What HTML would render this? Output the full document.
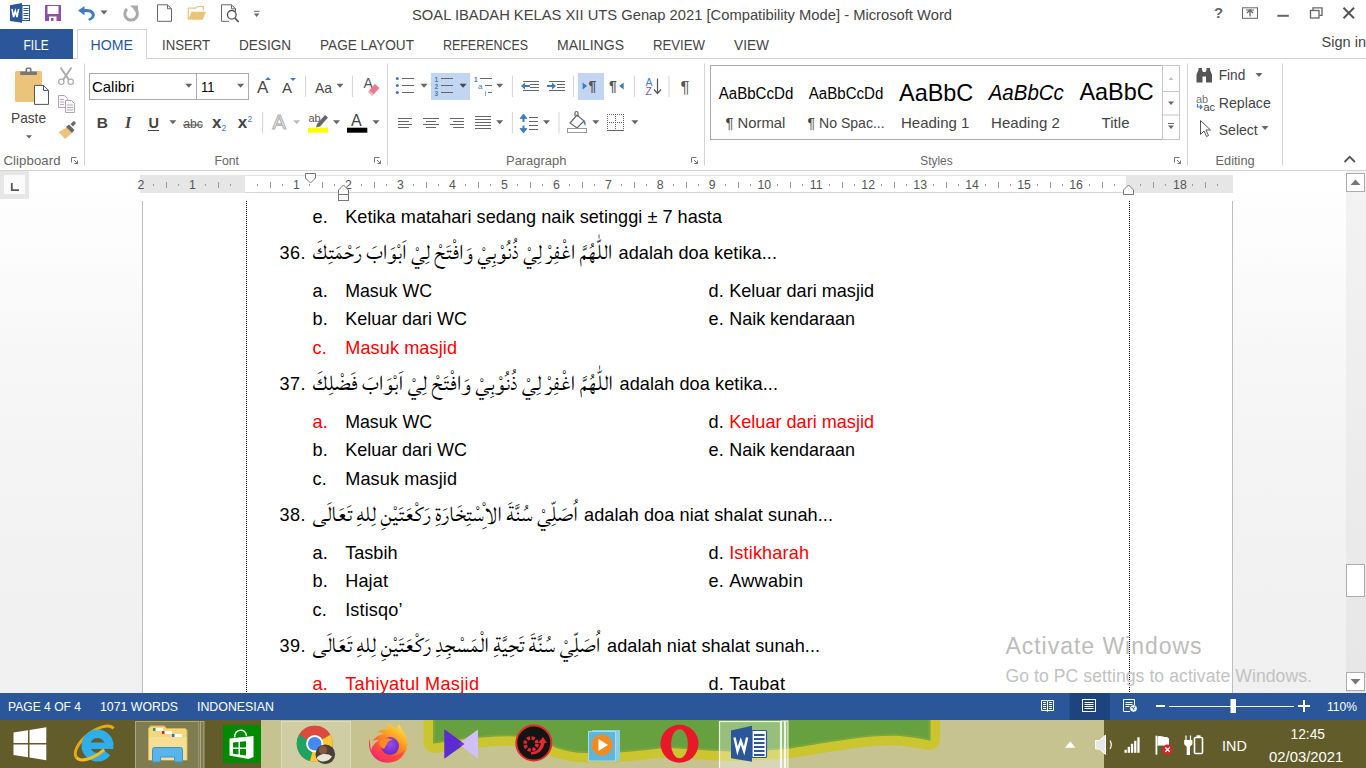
<!DOCTYPE html>
<html lang="id"><head><meta charset="utf-8"><title>SOAL IBADAH KELAS XII UTS Genap 2021 [Compatibility Mode] - Microsoft Word</title>
<style>
html,body{margin:0;padding:0;width:1366px;height:768px;overflow:hidden;background:#fff;font-family:"Liberation Sans",sans-serif}
#app{position:relative;width:1366px;height:768px;overflow:hidden;background:#fff}
#app>div{position:absolute;box-sizing:border-box}
#ov{position:absolute;left:0;top:0;width:1366px;height:768px}
text{white-space:pre}
</style></head><body><div id="app">
<div style="left:0px;top:171px;width:1366px;height:522px;background:linear-gradient(#ffffff 0%,#fefefe 6%,#f7f7f7 35%,#f3f3f3 62%,#f0f0f0 100%);"></div>
<div style="left:0px;top:170px;width:1366px;height:1px;background:#d4d4d4;"></div>
<div style="left:0px;top:29px;width:73px;height:30px;background:#2b579a;"></div>
<div style="left:73px;top:58px;width:1293px;height:1px;background:#d4d4d4;"></div>
<div style="left:77px;top:29px;width:70px;height:30px;background:#fff;border:1px solid #d4d4d4;border-bottom:none"></div>
<div style="left:0px;top:171px;width:29px;height:28px;background:#e6e6e6;"></div>
<div style="left:4px;top:175px;width:21px;height:19px;background:#fbfbfb;"></div>
<div style="left:140px;top:175px;width:1093px;height:18px;background:#e6e6e6;"></div>
<div style="left:245px;top:175px;width:881px;height:18px;background:#ffffff;border-bottom:1px solid #d6d6d6;border-top:1px solid #e2e2e2"></div>
<div style="left:142px;top:201px;width:1091px;height:492px;background:#fff;border-left:1px solid #bdbdbd;border-right:1px solid #bdbdbd"></div>
<div style="left:246px;top:201px;width:1px;height:492px;background:repeating-linear-gradient(#000 0,#000 1px,transparent 1px,transparent 2px);"></div>
<div style="left:1129px;top:201px;width:1px;height:492px;background:repeating-linear-gradient(#000 0,#000 1px,transparent 1px,transparent 2px);"></div>
<div style="left:1346px;top:171px;width:20px;height:522px;background:linear-gradient(#f3f3f3,#e6e6e6);"></div>
<div style="left:1346px;top:173px;width:19px;height:19px;background:#fff;border:1px solid #ababab"></div>
<div style="left:1346px;top:564px;width:19px;height:33px;background:#fff;border:1px solid #ababab"></div>
<div style="left:1346px;top:672px;width:19px;height:19px;background:#fff;border:1px solid #ababab"></div>
<div style="left:0px;top:693px;width:1366px;height:27px;background:#2b579a;"></div>
<div style="left:0px;top:720px;width:1366px;height:48px;background:#c6c391;"></div>
<div style="left:0px;top:720px;width:261px;height:48px;background:#625c2a;"></div>
<div style="left:1104px;top:720px;width:262px;height:48px;background:#625c2a;"></div>
<div style="left:89px;top:73px;width:108px;height:27px;background:#fff;border:1px solid #ababab"></div>
<div style="left:196px;top:73px;width:53px;height:27px;background:#fff;border:1px solid #ababab"></div>
<div style="left:710px;top:65px;width:470px;height:75px;background:#fff;border:1px solid #ababab"></div>
<div style="left:1162px;top:65px;width:18px;height:75px;background:#fff;border:1px solid #c6c6c6;border-left:1px solid #c6c6c6"></div>
<svg id="ov" width="1366" height="768" viewBox="0 0 1366 768">
<path d="M1350.5 185l5-5.5 5 5.5z" fill="#777"/>
<path d="M1350.5 679l5 5.5 5-5.5z" fill="#777"/>
<text x="412.0" y="19.5" font-family="'Liberation Sans', sans-serif" font-size="15" fill="#444444" textLength="540.0" lengthAdjust="spacingAndGlyphs">SOAL IBADAH KELAS XII UTS Genap 2021 [Compatibility Mode] - Microsoft Word</text>
<text x="23.6" y="49.8" font-family="'Liberation Sans', sans-serif" font-size="15" fill="#fff" textLength="25.1" lengthAdjust="spacingAndGlyphs">FILE</text>
<text x="90.5" y="49.8" font-family="'Liberation Sans', sans-serif" font-size="15" fill="#2b579a" textLength="42.5" lengthAdjust="spacingAndGlyphs">HOME</text>
<text x="162.0" y="49.8" font-family="'Liberation Sans', sans-serif" font-size="15" fill="#444444" textLength="48.0" lengthAdjust="spacingAndGlyphs">INSERT</text>
<text x="239.0" y="49.8" font-family="'Liberation Sans', sans-serif" font-size="15" fill="#444444" textLength="52.0" lengthAdjust="spacingAndGlyphs">DESIGN</text>
<text x="320.0" y="49.8" font-family="'Liberation Sans', sans-serif" font-size="15" fill="#444444" textLength="94.0" lengthAdjust="spacingAndGlyphs">PAGE LAYOUT</text>
<text x="443.0" y="49.8" font-family="'Liberation Sans', sans-serif" font-size="15" fill="#444444" textLength="85.0" lengthAdjust="spacingAndGlyphs">REFERENCES</text>
<text x="557.0" y="49.8" font-family="'Liberation Sans', sans-serif" font-size="15" fill="#444444" textLength="67.0" lengthAdjust="spacingAndGlyphs">MAILINGS</text>
<text x="653.0" y="49.8" font-family="'Liberation Sans', sans-serif" font-size="15" fill="#444444" textLength="52.0" lengthAdjust="spacingAndGlyphs">REVIEW</text>
<text x="734.0" y="49.8" font-family="'Liberation Sans', sans-serif" font-size="15" fill="#444444" textLength="35.0" lengthAdjust="spacingAndGlyphs">VIEW</text>
<text x="1321.5" y="47.0" font-family="'Liberation Sans', sans-serif" font-size="15" fill="#444444" textLength="44.5" lengthAdjust="spacingAndGlyphs">Sign in</text>
<text x="3.5" y="164.8" font-family="'Liberation Sans', sans-serif" font-size="13.2" fill="#666" textLength="57.0" lengthAdjust="spacing">Clipboard</text>
<text x="214.5" y="164.8" font-family="'Liberation Sans', sans-serif" font-size="13.2" fill="#666" textLength="24.5" lengthAdjust="spacingAndGlyphs">Font</text>
<text x="506.0" y="164.8" font-family="'Liberation Sans', sans-serif" font-size="13.2" fill="#666" textLength="60.4" lengthAdjust="spacingAndGlyphs">Paragraph</text>
<text x="920.3" y="164.8" font-family="'Liberation Sans', sans-serif" font-size="13.2" fill="#666" textLength="32.3" lengthAdjust="spacingAndGlyphs">Styles</text>
<text x="1215.6" y="164.8" font-family="'Liberation Sans', sans-serif" font-size="13.2" fill="#666" textLength="39.0" lengthAdjust="spacingAndGlyphs">Editing</text>
<text x="11.0" y="122.7" font-family="'Liberation Sans', sans-serif" font-size="15" fill="#444444" textLength="35.0" lengthAdjust="spacingAndGlyphs">Paste</text>
<text x="92.0" y="91.6" font-family="'Liberation Sans', sans-serif" font-size="15" fill="#000" textLength="42.4" lengthAdjust="spacingAndGlyphs">Calibri</text>
<text x="201.0" y="91.6" font-family="'Liberation Sans', sans-serif" font-size="15" fill="#000" textLength="13.5" lengthAdjust="spacingAndGlyphs">11</text>
<text x="718.7" y="98.5" font-family="'Liberation Sans', sans-serif" font-size="16" fill="#000" textLength="74.6" lengthAdjust="spacingAndGlyphs">AaBbCcDd</text>
<text x="725.4" y="127.7" font-family="'Liberation Sans', sans-serif" font-size="15" fill="#444444" textLength="60.0" lengthAdjust="spacingAndGlyphs">¶ Normal</text>
<text x="808.8" y="98.5" font-family="'Liberation Sans', sans-serif" font-size="16" fill="#000" textLength="74.6" lengthAdjust="spacingAndGlyphs">AaBbCcDd</text>
<text x="807.5" y="127.7" font-family="'Liberation Sans', sans-serif" font-size="15" fill="#444444" textLength="77.2" lengthAdjust="spacingAndGlyphs">¶ No Spac...</text>
<text x="899.0" y="100.5" font-family="'Liberation Sans', sans-serif" font-size="24" fill="#000" textLength="74.3" lengthAdjust="spacingAndGlyphs">AaBbC</text>
<text x="901.0" y="127.7" font-family="'Liberation Sans', sans-serif" font-size="15" fill="#444444" textLength="68.3" lengthAdjust="spacingAndGlyphs">Heading 1</text>
<text x="988.7" y="100.3" font-family="'Liberation Sans', sans-serif" font-size="21.5" fill="#000" font-style="italic" textLength="75.1" lengthAdjust="spacingAndGlyphs">AaBbCc</text>
<text x="991.0" y="127.7" font-family="'Liberation Sans', sans-serif" font-size="15" fill="#444444" textLength="68.9" lengthAdjust="spacing">Heading 2</text>
<text x="1079.4" y="100.3" font-family="'Liberation Sans', sans-serif" font-size="24" fill="#000" textLength="74.2" lengthAdjust="spacingAndGlyphs">AaBbC</text>
<text x="1101.5" y="127.7" font-family="'Liberation Sans', sans-serif" font-size="15" fill="#444444" textLength="28.1" lengthAdjust="spacing">Title</text>
<text x="1218.7" y="80.2" font-family="'Liberation Sans', sans-serif" font-size="15" fill="#444444" textLength="26.6" lengthAdjust="spacingAndGlyphs">Find</text>
<text x="1218.7" y="107.6" font-family="'Liberation Sans', sans-serif" font-size="15" fill="#444444" textLength="52.1" lengthAdjust="spacingAndGlyphs">Replace</text>
<text x="1218.7" y="134.9" font-family="'Liberation Sans', sans-serif" font-size="15" fill="#444444" textLength="39.1" lengthAdjust="spacingAndGlyphs">Select</text>
<text x="137.4" y="188.8" font-family="'Liberation Sans', sans-serif" font-size="12.3" fill="#555">2</text>
<text x="189.1" y="188.8" font-family="'Liberation Sans', sans-serif" font-size="12.3" fill="#555">1</text>
<text x="293.0" y="188.8" font-family="'Liberation Sans', sans-serif" font-size="12.3" fill="#555">1</text>
<text x="345.0" y="188.8" font-family="'Liberation Sans', sans-serif" font-size="12.3" fill="#555">2</text>
<text x="397.0" y="188.8" font-family="'Liberation Sans', sans-serif" font-size="12.3" fill="#555">3</text>
<text x="449.0" y="188.8" font-family="'Liberation Sans', sans-serif" font-size="12.3" fill="#555">4</text>
<text x="500.9" y="188.8" font-family="'Liberation Sans', sans-serif" font-size="12.3" fill="#555">5</text>
<text x="552.9" y="188.8" font-family="'Liberation Sans', sans-serif" font-size="12.3" fill="#555">6</text>
<text x="604.9" y="188.8" font-family="'Liberation Sans', sans-serif" font-size="12.3" fill="#555">7</text>
<text x="656.8" y="188.8" font-family="'Liberation Sans', sans-serif" font-size="12.3" fill="#555">8</text>
<text x="708.8" y="188.8" font-family="'Liberation Sans', sans-serif" font-size="12.3" fill="#555">9</text>
<text x="757.4" y="188.8" font-family="'Liberation Sans', sans-serif" font-size="12.3" fill="#555">10</text>
<text x="809.8" y="188.8" font-family="'Liberation Sans', sans-serif" font-size="12.3" fill="#555">11</text>
<text x="861.3" y="188.8" font-family="'Liberation Sans', sans-serif" font-size="12.3" fill="#555">12</text>
<text x="913.3" y="188.8" font-family="'Liberation Sans', sans-serif" font-size="12.3" fill="#555">13</text>
<text x="965.2" y="188.8" font-family="'Liberation Sans', sans-serif" font-size="12.3" fill="#555">14</text>
<text x="1017.2" y="188.8" font-family="'Liberation Sans', sans-serif" font-size="12.3" fill="#555">15</text>
<text x="1069.2" y="188.8" font-family="'Liberation Sans', sans-serif" font-size="12.3" fill="#555">16</text>
<text x="1173.1" y="188.8" font-family="'Liberation Sans', sans-serif" font-size="12.3" fill="#555">18</text>
<rect x="153" y="184" width="1" height="2" fill="#999"/>
<rect x="166" y="182" width="1" height="6" fill="#999"/>
<rect x="178" y="184" width="1" height="2" fill="#999"/>
<rect x="205" y="184" width="1" height="2" fill="#999"/>
<rect x="218" y="182" width="1" height="6" fill="#999"/>
<rect x="230" y="184" width="1" height="2" fill="#999"/>
<rect x="257" y="184" width="1" height="2" fill="#999"/>
<rect x="270" y="182" width="1" height="6" fill="#999"/>
<rect x="282" y="184" width="1" height="2" fill="#999"/>
<rect x="309" y="184" width="1" height="2" fill="#999"/>
<rect x="322" y="182" width="1" height="6" fill="#999"/>
<rect x="334" y="184" width="1" height="2" fill="#999"/>
<rect x="361" y="184" width="1" height="2" fill="#999"/>
<rect x="374" y="182" width="1" height="6" fill="#999"/>
<rect x="386" y="184" width="1" height="2" fill="#999"/>
<rect x="413" y="184" width="1" height="2" fill="#999"/>
<rect x="426" y="182" width="1" height="6" fill="#999"/>
<rect x="438" y="184" width="1" height="2" fill="#999"/>
<rect x="465" y="184" width="1" height="2" fill="#999"/>
<rect x="478" y="182" width="1" height="6" fill="#999"/>
<rect x="490" y="184" width="1" height="2" fill="#999"/>
<rect x="517" y="184" width="1" height="2" fill="#999"/>
<rect x="530" y="182" width="1" height="6" fill="#999"/>
<rect x="542" y="184" width="1" height="2" fill="#999"/>
<rect x="569" y="184" width="1" height="2" fill="#999"/>
<rect x="582" y="182" width="1" height="6" fill="#999"/>
<rect x="594" y="184" width="1" height="2" fill="#999"/>
<rect x="621" y="184" width="1" height="2" fill="#999"/>
<rect x="634" y="182" width="1" height="6" fill="#999"/>
<rect x="646" y="184" width="1" height="2" fill="#999"/>
<rect x="673" y="184" width="1" height="2" fill="#999"/>
<rect x="686" y="182" width="1" height="6" fill="#999"/>
<rect x="698" y="184" width="1" height="2" fill="#999"/>
<rect x="725" y="184" width="1" height="2" fill="#999"/>
<rect x="738" y="182" width="1" height="6" fill="#999"/>
<rect x="750" y="184" width="1" height="2" fill="#999"/>
<rect x="777" y="184" width="1" height="2" fill="#999"/>
<rect x="790" y="182" width="1" height="6" fill="#999"/>
<rect x="802" y="184" width="1" height="2" fill="#999"/>
<rect x="829" y="184" width="1" height="2" fill="#999"/>
<rect x="842" y="182" width="1" height="6" fill="#999"/>
<rect x="854" y="184" width="1" height="2" fill="#999"/>
<rect x="881" y="184" width="1" height="2" fill="#999"/>
<rect x="894" y="182" width="1" height="6" fill="#999"/>
<rect x="906" y="184" width="1" height="2" fill="#999"/>
<rect x="933" y="184" width="1" height="2" fill="#999"/>
<rect x="946" y="182" width="1" height="6" fill="#999"/>
<rect x="958" y="184" width="1" height="2" fill="#999"/>
<rect x="985" y="184" width="1" height="2" fill="#999"/>
<rect x="998" y="182" width="1" height="6" fill="#999"/>
<rect x="1010" y="184" width="1" height="2" fill="#999"/>
<rect x="1037" y="184" width="1" height="2" fill="#999"/>
<rect x="1050" y="182" width="1" height="6" fill="#999"/>
<rect x="1062" y="184" width="1" height="2" fill="#999"/>
<rect x="1089" y="184" width="1" height="2" fill="#999"/>
<rect x="1102" y="182" width="1" height="6" fill="#999"/>
<rect x="1114" y="184" width="1" height="2" fill="#999"/>
<rect x="1140" y="184" width="1" height="2" fill="#999"/>
<rect x="1153" y="182" width="1" height="6" fill="#999"/>
<rect x="1165" y="184" width="1" height="2" fill="#999"/>
<rect x="1192" y="184" width="1" height="2" fill="#999"/>
<rect x="1205" y="182" width="1" height="6" fill="#999"/>
<rect x="1217" y="184" width="1" height="2" fill="#999"/>
<text x="312.6" y="222.9" font-family="'Liberation Sans', sans-serif" font-size="18.1" fill="#000">e.</text>
<text x="345.2" y="222.9" font-family="'Liberation Sans', sans-serif" font-size="18.1" fill="#000" textLength="376.8" lengthAdjust="spacing">Ketika matahari sedang naik setinggi ± 7 hasta</text>
<text x="279.6" y="258.5" font-family="'Liberation Sans', sans-serif" font-size="18.1" fill="#000" textLength="26.0" lengthAdjust="spacing">36.</text>
<text x="312.4" y="258.5" font-family="Lateef, 'Scheherazade New', Amiri, 'Noto Naskh Arabic', 'DejaVu Sans', sans-serif" font-size="27.5" fill="#000" textLength="299.9" lengthAdjust="spacingAndGlyphs" font-weight="300">اللّٰهُمَّ اغْفِرْ لِيْ ذُنُوْبِيْ وَافْتَحْ لِيْ اَبْوَابَ رَحْمَتِكَ</text>
<text x="618.5" y="258.5" font-family="'Liberation Sans', sans-serif" font-size="18.1" fill="#000" textLength="158.5" lengthAdjust="spacing">adalah doa ketika...</text>
<text x="312.6" y="296.5" font-family="'Liberation Sans', sans-serif" font-size="18.1" fill="#000">a.</text>
<text x="345.2" y="296.5" font-family="'Liberation Sans', sans-serif" font-size="18.1" fill="#000" textLength="86.8" lengthAdjust="spacingAndGlyphs">Masuk WC</text>
<text x="312.6" y="325.1" font-family="'Liberation Sans', sans-serif" font-size="18.1" fill="#000">b.</text>
<text x="345.2" y="325.1" font-family="'Liberation Sans', sans-serif" font-size="18.1" fill="#000" textLength="121.8" lengthAdjust="spacingAndGlyphs">Keluar dari WC</text>
<text x="312.6" y="353.8" font-family="'Liberation Sans', sans-serif" font-size="18.1" fill="#ff0000">c.</text>
<text x="345.2" y="353.8" font-family="'Liberation Sans', sans-serif" font-size="18.1" fill="#ff0000" textLength="111.8" lengthAdjust="spacing">Masuk masjid</text>
<text x="708.6" y="296.5" font-family="'Liberation Sans', sans-serif" font-size="18.1" fill="#000">d.</text>
<text x="729.2" y="296.5" font-family="'Liberation Sans', sans-serif" font-size="18.1" fill="#000" textLength="144.8" lengthAdjust="spacingAndGlyphs">Keluar dari masjid</text>
<text x="708.6" y="325.1" font-family="'Liberation Sans', sans-serif" font-size="18.1" fill="#000">e.</text>
<text x="729.2" y="325.1" font-family="'Liberation Sans', sans-serif" font-size="18.1" fill="#000" textLength="125.8" lengthAdjust="spacingAndGlyphs">Naik kendaraan</text>
<text x="279.6" y="389.5" font-family="'Liberation Sans', sans-serif" font-size="18.1" fill="#000" textLength="26.0" lengthAdjust="spacing">37.</text>
<text x="312.4" y="389.5" font-family="Lateef, 'Scheherazade New', Amiri, 'Noto Naskh Arabic', 'DejaVu Sans', sans-serif" font-size="27.5" fill="#000" textLength="300.6" lengthAdjust="spacingAndGlyphs" font-weight="300">اللّٰهُمَّ اغْفِرْ لِيْ ذُنُوْبِيْ وَافْتَحْ لِيْ اَبْوَابَ فَضْلِكَ</text>
<text x="619.5" y="389.5" font-family="'Liberation Sans', sans-serif" font-size="18.1" fill="#000" textLength="158.5" lengthAdjust="spacing">adalah doa ketika...</text>
<text x="312.6" y="427.5" font-family="'Liberation Sans', sans-serif" font-size="18.1" fill="#ff0000">a.</text>
<text x="345.2" y="427.5" font-family="'Liberation Sans', sans-serif" font-size="18.1" fill="#000" textLength="86.8" lengthAdjust="spacingAndGlyphs">Masuk WC</text>
<text x="312.6" y="456.1" font-family="'Liberation Sans', sans-serif" font-size="18.1" fill="#000">b.</text>
<text x="345.2" y="456.1" font-family="'Liberation Sans', sans-serif" font-size="18.1" fill="#000" textLength="121.8" lengthAdjust="spacingAndGlyphs">Keluar dari WC</text>
<text x="312.6" y="484.8" font-family="'Liberation Sans', sans-serif" font-size="18.1" fill="#000">c.</text>
<text x="345.2" y="484.8" font-family="'Liberation Sans', sans-serif" font-size="18.1" fill="#000" textLength="111.8" lengthAdjust="spacing">Masuk masjid</text>
<text x="708.6" y="427.5" font-family="'Liberation Sans', sans-serif" font-size="18.1" fill="#000">d.</text>
<text x="729.2" y="427.5" font-family="'Liberation Sans', sans-serif" font-size="18.1" fill="#ff0000" textLength="144.8" lengthAdjust="spacingAndGlyphs">Keluar dari masjid</text>
<text x="708.6" y="456.1" font-family="'Liberation Sans', sans-serif" font-size="18.1" fill="#000">e.</text>
<text x="729.2" y="456.1" font-family="'Liberation Sans', sans-serif" font-size="18.1" fill="#000" textLength="125.8" lengthAdjust="spacingAndGlyphs">Naik kendaraan</text>
<text x="279.6" y="520.5" font-family="'Liberation Sans', sans-serif" font-size="18.1" fill="#000" textLength="26.0" lengthAdjust="spacing">38.</text>
<text x="312.4" y="520.5" font-family="Lateef, 'Scheherazade New', Amiri, 'Noto Naskh Arabic', 'DejaVu Sans', sans-serif" font-size="27.5" fill="#000" textLength="265.6" lengthAdjust="spacingAndGlyphs" font-weight="300">اُصَلِّيْ سُنَّةَ الْاِسْتِخَارَةِ رَكْعَتَيْنِ لِلهِ تَعَالَى</text>
<text x="584.0" y="520.5" font-family="'Liberation Sans', sans-serif" font-size="18.1" fill="#000" textLength="249.0" lengthAdjust="spacing">adalah doa niat shalat sunah...</text>
<text x="312.6" y="558.5" font-family="'Liberation Sans', sans-serif" font-size="18.1" fill="#000">a.</text>
<text x="345.2" y="558.5" font-family="'Liberation Sans', sans-serif" font-size="18.1" fill="#000" textLength="52.3" lengthAdjust="spacingAndGlyphs">Tasbih</text>
<text x="312.6" y="587.1" font-family="'Liberation Sans', sans-serif" font-size="18.1" fill="#000">b.</text>
<text x="345.2" y="587.1" font-family="'Liberation Sans', sans-serif" font-size="18.1" fill="#000" textLength="42.8" lengthAdjust="spacing">Hajat</text>
<text x="312.6" y="615.8" font-family="'Liberation Sans', sans-serif" font-size="18.1" fill="#000">c.</text>
<text x="345.2" y="615.8" font-family="'Liberation Sans', sans-serif" font-size="18.1" fill="#000" textLength="57.3" lengthAdjust="spacing">Istisqo’</text>
<text x="708.6" y="558.5" font-family="'Liberation Sans', sans-serif" font-size="18.1" fill="#000">d.</text>
<text x="729.2" y="558.5" font-family="'Liberation Sans', sans-serif" font-size="18.1" fill="#ff0000" textLength="79.8" lengthAdjust="spacing">Istikharah</text>
<text x="708.6" y="587.1" font-family="'Liberation Sans', sans-serif" font-size="18.1" fill="#000">e.</text>
<text x="729.2" y="587.1" font-family="'Liberation Sans', sans-serif" font-size="18.1" fill="#000" textLength="73.8" lengthAdjust="spacing">Awwabin</text>
<text x="279.6" y="651.5" font-family="'Liberation Sans', sans-serif" font-size="18.1" fill="#000" textLength="26.0" lengthAdjust="spacing">39.</text>
<text x="312.4" y="651.5" font-family="Lateef, 'Scheherazade New', Amiri, 'Noto Naskh Arabic', 'DejaVu Sans', sans-serif" font-size="27.5" fill="#000" textLength="288.1" lengthAdjust="spacingAndGlyphs" font-weight="300">اُصَلِّيْ سُنَّةَ تَحِيَّةِ الْمَسْجِدِ رَكْعَتَيْنِ لِلهِ تَعَالَى</text>
<text x="607.0" y="651.5" font-family="'Liberation Sans', sans-serif" font-size="18.1" fill="#000" textLength="213.0" lengthAdjust="spacing">adalah niat shalat sunah...</text>
<g clip-path="url(#docclip)">
<text x="312.6" y="689.5" font-family="'Liberation Sans', sans-serif" font-size="18.1" fill="#ff0000">a.</text>
<text x="345.2" y="689.5" font-family="'Liberation Sans', sans-serif" font-size="18.1" fill="#ff0000" textLength="133.8" lengthAdjust="spacing">Tahiyatul Masjid</text>
<text x="708.6" y="689.5" font-family="'Liberation Sans', sans-serif" font-size="18.1" fill="#000">d.</text>
<text x="729.2" y="689.5" font-family="'Liberation Sans', sans-serif" font-size="18.1" fill="#000" textLength="55.8" lengthAdjust="spacing">Taubat</text>
</g>
<defs><clipPath id="docclip"><rect x="0" y="200" width="1366" height="493"/></clipPath></defs>
<text x="1005.5" y="654.0" font-family="'Liberation Sans', sans-serif" font-size="23" fill="#bcbcbc" textLength="196.0" lengthAdjust="spacing">Activate Windows</text>
<text x="1005.5" y="681.5" font-family="'Liberation Sans', sans-serif" font-size="17.6" fill="#c2c2c2" textLength="306.5" lengthAdjust="spacing">Go to PC settings to activate Windows.</text>
<text x="8.0" y="711.0" font-family="'Liberation Sans', sans-serif" font-size="13.2" fill="#fff" textLength="73.0" lengthAdjust="spacingAndGlyphs">PAGE 4 OF 4</text>
<text x="100.0" y="711.0" font-family="'Liberation Sans', sans-serif" font-size="13.2" fill="#fff" textLength="78.0" lengthAdjust="spacingAndGlyphs">1071 WORDS</text>
<text x="197.0" y="711.0" font-family="'Liberation Sans', sans-serif" font-size="13.2" fill="#fff" textLength="77.0" lengthAdjust="spacingAndGlyphs">INDONESIAN</text>
<text x="1327.0" y="711.0" font-family="'Liberation Sans', sans-serif" font-size="13.2" fill="#fff" textLength="30.0" lengthAdjust="spacingAndGlyphs">110%</text>
<text x="1222.0" y="751.0" font-family="'Liberation Sans', sans-serif" font-size="15" fill="#fff" textLength="24.8" lengthAdjust="spacingAndGlyphs">IND</text>
<text x="1290.5" y="739.4" font-family="'Liberation Sans', sans-serif" font-size="15" fill="#fff" textLength="34.5" lengthAdjust="spacingAndGlyphs">12:45</text>
<text x="1269.0" y="762.0" font-family="'Liberation Sans', sans-serif" font-size="15" fill="#fff" textLength="74.3" lengthAdjust="spacingAndGlyphs">02/03/2021</text>
<path d="M10 5.3L22 2.9V22.7L10 21z" fill="#2b579a"/>
<rect x="22" y="5.5" width="7.5" height="15" fill="#fff" stroke="#2b579a" stroke-width="1"/>
<rect x="23.5" y="8" width="5" height="1" fill="#2b579a"/>
<rect x="23.5" y="10" width="5" height="1" fill="#2b579a"/>
<rect x="23.5" y="13" width="5" height="1" fill="#2b579a"/>
<rect x="23.5" y="15" width="5" height="1" fill="#2b579a"/>
<rect x="23.5" y="18" width="5" height="1" fill="#2b579a"/>
<path d="M12 9l1.6 8 1.7-6 1.7 6 1.6-8" fill="none" stroke="#fff" stroke-width="1.6"/>
<path d="M45 5h16v16h-16z" fill="#8d52a8"/><rect x="47.5" y="6" width="11" height="8" fill="#fff"/><rect x="49" y="16.5" width="7.5" height="4.5" fill="#fff"/><rect x="51" y="18" width="2.5" height="3" fill="#8d52a8"/>
<path d="M78 10.5l6.5-4.5v3c7-.6 10.5 2.5 10.3 6.3-.2 3-2.6 4.800-5.800 5.500l-.8-2c2.600-.9 3.600-2 3.600-3.700 0-2.300-2.800-3.600-7.300-3.100v3.200z" fill="#3e7cc0"/>
<path d="M100.5 10.5h7l-3.5 4z" fill="#666"/>
<path d="M134.500 8.500a6.300 6.300 0 1 1-7.500.5" fill="none" stroke="#ababab" stroke-width="3"/><path d="M130 5.500h8v8z" fill="#ababab"/>
<path d="M157.500 4.800h10l4 4v12.500h-14z" fill="#fff" stroke="#666" stroke-width="1"/><path d="M167.500 4.800v4h4" fill="none" stroke="#666" stroke-width="1"/>
<path d="M188.300 19.500v-11.300h7.500l1.500-1.700h6v4" fill="none" stroke="#ecc37a" stroke-width="1.200"/><path d="M188.300 19.800l3.200-8h14.500l-3.200 8z" fill="#ecc37a"/>
<path d="M221.500 4.800h10l4 4v3M229 21.300h-7.500v-16.500" fill="none" stroke="#666" stroke-width="1"/><path d="M231.500 4.800v4h4" fill="none" stroke="#666" stroke-width="1"/><circle cx="231.800" cy="14.800" r="4.300" fill="#fff" stroke="#555" stroke-width="1.300"/><path d="M235 18l3.600 4" stroke="#555" stroke-width="1.800"/>
<rect x="254" y="10.800" width="5.500" height="1" fill="#666"/>
<path d="M253.9 13.6h5.5l-2.8 3.5z" fill="#666"/>
<text x="1214.0" y="18.0" font-family="'Liberation Sans', sans-serif" font-size="15" fill="#666" font-weight="bold">?</text>
<rect x="1242.500" y="7.800" width="15" height="10.500" fill="none" stroke="#666" stroke-width="1"/><path d="M1250 16.500v-6m-3 2.500l3-3 3 3" fill="none" stroke="#666" stroke-width="1.300"/><rect x="1246" y="9.500" width="8" height="1" fill="#666"/>
<rect x="1277.300" y="14.800" width="11.500" height="2" fill="#666"/>
<path d="M1313 10v-2.200h9v7.500h-2.500" fill="none" stroke="#666" stroke-width="1.300"/><rect x="1310.500" y="10.500" width="8.500" height="7.500" fill="none" stroke="#666" stroke-width="1.300"/>
<path d="M1343.500 7.800l10.500 10.500m0-10.500l-10.500 10.500" stroke="#555" stroke-width="2"/>
<path d="M1344.500 162l5.200-5.200 5.200 5.200" fill="none" stroke="#555" stroke-width="1.800"/>
<rect x="84.0" y="63.5" width="1" height="102" fill="#d4d4d4"/>
<rect x="387.0" y="63.5" width="1" height="102" fill="#d4d4d4"/>
<rect x="704.0" y="63.5" width="1" height="102" fill="#d4d4d4"/>
<rect x="1187.0" y="63.5" width="1" height="102" fill="#d4d4d4"/>
<rect x="1282.0" y="63.5" width="1" height="102" fill="#d4d4d4"/>
<path d="M71.5 162.5v-5h5" fill="none" stroke="#777" stroke-width="1"/><path d="M74.0 160.0l3.500 3.500m0-3v3h-3" fill="none" stroke="#777" stroke-width="1"/>
<path d="M374.5 162.5v-5h5" fill="none" stroke="#777" stroke-width="1"/><path d="M377.0 160.0l3.500 3.500m0-3v3h-3" fill="none" stroke="#777" stroke-width="1"/>
<path d="M691.5 162.5v-5h5" fill="none" stroke="#777" stroke-width="1"/><path d="M694.0 160.0l3.500 3.500m0-3v3h-3" fill="none" stroke="#777" stroke-width="1"/>
<path d="M1174.5 162.5v-5h5" fill="none" stroke="#777" stroke-width="1"/><path d="M1177.0 160.0l3.500 3.500m0-3v3h-3" fill="none" stroke="#777" stroke-width="1"/>
<rect x="15" y="71" width="27" height="31" rx="1.500" fill="#ecc37a"/>
<path d="M20.200 75v-3.500h5.300v-2.500a1.500 1.500 0 0 1 1.500-1.500h3a1.500 1.500 0 0 1 1.500 1.500v2.500h5.400v3.500z" fill="#777"/><rect x="27.200" y="69" width="2.600" height="2.600" fill="#fff"/>
<path d="M34.500 85.400h9l5 5v14h-14z" fill="#fff" stroke="#555" stroke-width="1"/><path d="M43.500 85.400v5h5" fill="none" stroke="#555" stroke-width="1"/>
<path d="M26.0 135.3h6l-3.0 3.2z" fill="#666"/>
<path d="M60.500 67.500l8.500 12.500M71.500 67.500l-8.500 12.500" stroke="#ababab" stroke-width="2"/><circle cx="61.300" cy="81.800" r="2.700" fill="none" stroke="#ababab" stroke-width="1.200"/><circle cx="70.700" cy="81.800" r="2.700" fill="none" stroke="#ababab" stroke-width="1.200"/>
<path d="M58.500 95.500h6l3 3v9h-9z" fill="#fbf6fa" stroke="#b0a8b0" stroke-width="1"/><path d="M65.500 100.500h6l3 3v9h-9z" fill="#fbf6fa" stroke="#b0a8b0" stroke-width="1"/>
<rect x="60" y="99" width="4" height="1" fill="#b8b0b8"/>
<rect x="60" y="101.5" width="4" height="1" fill="#b8b0b8"/>
<rect x="60" y="104" width="4" height="1" fill="#b8b0b8"/>
<rect x="67" y="104.5" width="6" height="1" fill="#b8b0b8"/>
<rect x="67" y="107" width="6" height="1" fill="#b8b0b8"/>
<rect x="67" y="109.5" width="6" height="1" fill="#b8b0b8"/>
<path d="M58.600 132l8-4.500 5.500 5.500-7 6z" fill="#ecc37a"/><path d="M66 127l3-2.500 5.500 5.500-2.500 3z" fill="#666"/><path d="M70.500 124l3.500-3 2 2-3 3.500z" fill="#666"/>
<path d="M185.3 83.7h7l-3.5 4z" fill="#666"/>
<path d="M237.1 83.7h7l-3.5 4z" fill="#666"/>
<text x="257.0" y="93.0" font-family="'Liberation Sans', sans-serif" font-size="17" fill="#484848">A</text>
<path d="M265 80l3-3 3 3z" fill="#3e7cc0"/>
<text x="282.0" y="93.0" font-family="'Liberation Sans', sans-serif" font-size="15" fill="#484848">A</text>
<path d="M290 78h6l-3 3z" fill="#3e7cc0"/>
<rect x="305.1" y="75.5" width="1" height="21.5" fill="#d4d4d4"/>
<text x="315.0" y="92.5" font-family="'Liberation Sans', sans-serif" font-size="15" fill="#484848" textLength="17.0" lengthAdjust="spacingAndGlyphs">Aa</text>
<path d="M336.5 83.7h7l-3.5 4z" fill="#666"/>
<rect x="351.9" y="75.5" width="1" height="21.5" fill="#d4d4d4"/>
<text x="363.5" y="88.3" font-family="'Liberation Sans', sans-serif" font-size="14" fill="#555">A</text>
<path d="M369 90.500l6-6.500 4.500 4-6 6.500z" fill="#e8788a"/><path d="M367.500 92l1.500-1.500 4.500 4-1.500 1.500z" fill="#f4b8c2"/>
<text x="96.8" y="128.4" font-family="'Liberation Sans', sans-serif" font-size="15.5" fill="#444" font-weight="bold">B</text>
<text x="125.0" y="128.4" font-family="'Liberation Serif', serif" font-size="16" fill="#444" font-weight="bold" font-style="italic">I</text>
<text x="148.6" y="127.8" font-family="'Liberation Sans', sans-serif" font-size="14.5" fill="#444" font-weight="bold">U</text>
<rect x="148" y="130" width="11" height="1" fill="#444"/>
<path d="M169.4 120.3h7l-3.5 4z" fill="#666"/>
<text x="183.2" y="128.2" font-family="'Liberation Sans', sans-serif" font-size="13.5" fill="#555" textLength="19.7" lengthAdjust="spacingAndGlyphs">abc</text>
<rect x="183" y="124.500" width="20" height="1" fill="#555"/>
<text x="211.9" y="128.4" font-family="'Liberation Sans', sans-serif" font-size="17" fill="#444" font-weight="bold">x</text>
<text x="221.5" y="131.0" font-family="'Liberation Sans', sans-serif" font-size="8.5" fill="#3e7cc0">2</text>
<text x="237.7" y="128.4" font-family="'Liberation Sans', sans-serif" font-size="17" fill="#444" font-weight="bold">x</text>
<text x="247.5" y="121.5" font-family="'Liberation Sans', sans-serif" font-size="8.5" fill="#3e7cc0">2</text>
<rect x="262.1" y="112" width="1" height="21.599999999999994" fill="#d4d4d4"/>
<text x="272.5" y="129.0" font-family="'Liberation Sans', sans-serif" font-size="20" fill="#fff" stroke="#b5b5b5" stroke-width="1.200">A</text>
<path d="M293.2 120.3h7l-3.5 4z" fill="#bbb"/>
<text x="308.5" y="121.5" font-family="'Liberation Sans', sans-serif" font-size="11" fill="#555">ab</text>
<path d="M317 124l8-9 3 2.500-8 9-4 1z" fill="#666"/>
<rect x="308" y="127.700" width="20" height="5" fill="#ffff00"/>
<path d="M333.0 120.3h7l-3.5 4z" fill="#666"/>
<text x="351.0" y="125.7" font-family="'Liberation Sans', sans-serif" font-size="16" fill="#444">A</text>
<rect x="347" y="127.700" width="20.300" height="5" fill="#000"/>
<path d="M372.5 120.3h7l-3.5 4z" fill="#666"/>
<rect x="431" y="73" width="39" height="27" fill="#c2d5f2"/>
<rect x="578" y="73" width="26" height="27" fill="#c2d5f2"/>
<circle cx="397.300" cy="78.5" r="1.500" fill="#3e7cc0"/>
<rect x="402" y="78" width="12" height="1" fill="#666"/>
<circle cx="397.300" cy="85.5" r="1.500" fill="#3e7cc0"/>
<rect x="402" y="85" width="12" height="1" fill="#666"/>
<circle cx="397.300" cy="92.5" r="1.500" fill="#3e7cc0"/>
<rect x="402" y="92" width="12" height="1" fill="#666"/>
<path d="M420.5 83.7h7l-3.5 4z" fill="#666"/>
<text x="434.5" y="81.5" font-family="'Liberation Sans', sans-serif" font-size="6.5" fill="#3e7cc0" font-weight="bold">1</text>
<rect x="441" y="78" width="12" height="1" fill="#666"/>
<text x="434.5" y="88.5" font-family="'Liberation Sans', sans-serif" font-size="6.5" fill="#3e7cc0" font-weight="bold">2</text>
<rect x="441" y="85" width="12" height="1" fill="#666"/>
<text x="434.5" y="95.5" font-family="'Liberation Sans', sans-serif" font-size="6.5" fill="#3e7cc0" font-weight="bold">3</text>
<rect x="441" y="92" width="12" height="1" fill="#666"/>
<path d="M459.5 83.7h7l-3.5 4z" fill="#444"/>
<text x="474.0" y="81.5" font-family="'Liberation Sans', sans-serif" font-size="6.5" fill="#3e7cc0" font-weight="bold">1</text>
<rect x="480" y="78" width="12" height="1" fill="#666"/>
<text x="478.0" y="89.0" font-family="'Liberation Sans', sans-serif" font-size="8" fill="#3e7cc0">a</text>
<rect x="485" y="85" width="7" height="1" fill="#666"/>
<text x="484.5" y="96.0" font-family="'Liberation Sans', sans-serif" font-size="8" fill="#3e7cc0">i</text>
<rect x="488" y="92" width="4" height="1" fill="#666"/>
<path d="M496.2 83.7h7l-3.5 4z" fill="#666"/>
<rect x="511.9" y="75.5" width="1" height="21.5" fill="#d4d4d4"/>
<rect x="523" y="81" width="16" height="1" fill="#666"/>
<rect x="530" y="84" width="9" height="1" fill="#666"/>
<rect x="530" y="87" width="9" height="1" fill="#666"/>
<rect x="523" y="90" width="16" height="1" fill="#666"/>
<path d="M521 86l4-3.500v2.500h5v2h-5v2.500z" fill="#3e7cc0"/>
<rect x="549" y="81" width="16" height="1" fill="#666"/>
<rect x="557" y="84" width="8" height="1" fill="#666"/>
<rect x="557" y="87" width="8" height="1" fill="#666"/>
<rect x="549" y="90" width="16" height="1" fill="#666"/>
<path d="M556 86l-4-3.500v2.500h-5v2h5v2.500z" fill="#3e7cc0"/>
<rect x="572.9" y="75.5" width="1" height="21.5" fill="#d4d4d4"/>
<path d="M582.600 82.500l4.500 3.500-4.500 3.500z" fill="#3e7cc0"/>
<text x="588.5" y="91.0" font-family="'Liberation Sans', sans-serif" font-size="14" fill="#555" font-weight="bold">¶</text>
<text x="609.0" y="91.0" font-family="'Liberation Sans', sans-serif" font-size="14" fill="#555" font-weight="bold">¶</text>
<path d="M623.700 82.500l-4.500 3.500 4.500 3.500z" fill="#3e7cc0"/>
<rect x="633.9" y="75.5" width="1" height="21.5" fill="#d4d4d4"/>
<text x="645.5" y="85.5" font-family="'Liberation Sans', sans-serif" font-size="10.5" fill="#3e7cc0">A</text>
<text x="645.5" y="95.0" font-family="'Liberation Sans', sans-serif" font-size="10.5" fill="#8d52a8">Z</text>
<path d="M657.500 78.500v15m-3.500-4l3.500 4 3.500-4" fill="none" stroke="#555" stroke-width="1.200"/>
<rect x="668.5" y="75.5" width="1" height="21.5" fill="#d4d4d4"/>
<text x="680.6" y="92.5" font-family="'Liberation Sans', sans-serif" font-size="17" fill="#555">¶</text>
<rect x="398" y="118" width="14" height="1" fill="#666"/>
<rect x="398" y="121" width="11" height="1" fill="#666"/>
<rect x="398" y="124" width="14" height="1" fill="#666"/>
<rect x="398" y="127" width="11" height="1" fill="#666"/>
<rect x="423" y="118" width="16" height="1" fill="#666"/>
<rect x="426" y="121" width="10" height="1" fill="#666"/>
<rect x="423" y="124" width="16" height="1" fill="#666"/>
<rect x="426" y="127" width="10" height="1" fill="#666"/>
<rect x="450" y="118" width="14" height="1" fill="#666"/>
<rect x="453" y="121" width="11" height="1" fill="#666"/>
<rect x="450" y="124" width="14" height="1" fill="#666"/>
<rect x="453" y="127" width="11" height="1" fill="#666"/>
<rect x="475" y="116" width="16" height="1" fill="#666"/>
<rect x="475" y="119" width="16" height="1" fill="#666"/>
<rect x="475" y="122" width="16" height="1" fill="#666"/>
<rect x="475" y="125" width="16" height="1" fill="#666"/>
<rect x="475" y="128" width="16" height="1" fill="#666"/>
<path d="M496.2 120.3h7l-3.5 4z" fill="#666"/>
<rect x="511.9" y="112" width="1" height="21.599999999999994" fill="#d4d4d4"/>
<path d="M523.500 116.500v5.500m0 3.500v5.500" fill="none" stroke="#3e7cc0" stroke-width="2"/><path d="M520 118.500l3.500-4.500 3.500 4.500zM520 128.500l3.500 4.500 3.500-4.500z" fill="#3e7cc0" stroke="#3e7cc0" stroke-width=".8" stroke-linejoin="round"/>
<rect x="529" y="117" width="9" height="1" fill="#666"/>
<rect x="529" y="121" width="9" height="1" fill="#666"/>
<rect x="529" y="125" width="9" height="1" fill="#666"/>
<rect x="529" y="129" width="9" height="1" fill="#666"/>
<path d="M543.0 120.3h7l-3.5 4z" fill="#666"/>
<rect x="558.5" y="112" width="1" height="21.599999999999994" fill="#d4d4d4"/>
<path d="M570 123l7-8 7 6-7 7z" fill="#fff" stroke="#666" stroke-width="1.200"/><path d="M575 116v-3a1.500 1.500 0 0 1 3 0v4" fill="none" stroke="#666" stroke-width="1.200"/><path d="M583 119.500c2.500 1 3 4 2.500 6.500-1.500-1.500-2-3.500-2.500-6.500z" fill="#3e7cc0"/>
<rect x="567.500" y="128.500" width="19" height="4" fill="#fff" stroke="#999" stroke-width="1"/>
<path d="M592.3 120.3h7l-3.5 4z" fill="#666"/>
<rect x="607" y="114" width="1" height="1" fill="#666"/><rect x="607" y="114" width="1" height="1" fill="#666"/>
<rect x="607" y="122" width="1" height="1" fill="#666"/><rect x="615" y="114" width="1" height="1" fill="#666"/>
<rect x="607" y="130" width="1" height="1" fill="#666"/><rect x="623" y="114" width="1" height="1" fill="#666"/>
<rect x="609" y="114" width="1" height="1" fill="#666"/><rect x="607" y="116" width="1" height="1" fill="#666"/>
<rect x="609" y="122" width="1" height="1" fill="#666"/><rect x="615" y="116" width="1" height="1" fill="#666"/>
<rect x="609" y="130" width="1" height="1" fill="#666"/><rect x="623" y="116" width="1" height="1" fill="#666"/>
<rect x="611" y="114" width="1" height="1" fill="#666"/><rect x="607" y="118" width="1" height="1" fill="#666"/>
<rect x="611" y="122" width="1" height="1" fill="#666"/><rect x="615" y="118" width="1" height="1" fill="#666"/>
<rect x="611" y="130" width="1" height="1" fill="#666"/><rect x="623" y="118" width="1" height="1" fill="#666"/>
<rect x="613" y="114" width="1" height="1" fill="#666"/><rect x="607" y="120" width="1" height="1" fill="#666"/>
<rect x="613" y="122" width="1" height="1" fill="#666"/><rect x="615" y="120" width="1" height="1" fill="#666"/>
<rect x="613" y="130" width="1" height="1" fill="#666"/><rect x="623" y="120" width="1" height="1" fill="#666"/>
<rect x="615" y="114" width="1" height="1" fill="#666"/><rect x="607" y="122" width="1" height="1" fill="#666"/>
<rect x="615" y="122" width="1" height="1" fill="#666"/><rect x="615" y="122" width="1" height="1" fill="#666"/>
<rect x="615" y="130" width="1" height="1" fill="#666"/><rect x="623" y="122" width="1" height="1" fill="#666"/>
<rect x="617" y="114" width="1" height="1" fill="#666"/><rect x="607" y="124" width="1" height="1" fill="#666"/>
<rect x="617" y="122" width="1" height="1" fill="#666"/><rect x="615" y="124" width="1" height="1" fill="#666"/>
<rect x="617" y="130" width="1" height="1" fill="#666"/><rect x="623" y="124" width="1" height="1" fill="#666"/>
<rect x="619" y="114" width="1" height="1" fill="#666"/><rect x="607" y="126" width="1" height="1" fill="#666"/>
<rect x="619" y="122" width="1" height="1" fill="#666"/><rect x="615" y="126" width="1" height="1" fill="#666"/>
<rect x="619" y="130" width="1" height="1" fill="#666"/><rect x="623" y="126" width="1" height="1" fill="#666"/>
<rect x="621" y="114" width="1" height="1" fill="#666"/><rect x="607" y="128" width="1" height="1" fill="#666"/>
<rect x="621" y="122" width="1" height="1" fill="#666"/><rect x="615" y="128" width="1" height="1" fill="#666"/>
<rect x="621" y="130" width="1" height="1" fill="#666"/><rect x="623" y="128" width="1" height="1" fill="#666"/>
<rect x="623" y="114" width="1" height="1" fill="#666"/><rect x="607" y="130" width="1" height="1" fill="#666"/>
<rect x="623" y="122" width="1" height="1" fill="#666"/><rect x="615" y="130" width="1" height="1" fill="#666"/>
<rect x="623" y="130" width="1" height="1" fill="#666"/><rect x="623" y="130" width="1" height="1" fill="#666"/>
<rect x="607" y="130" width="17" height="1" fill="#666"/>
<path d="M631.4 120.3h7l-3.5 4z" fill="#666"/>
<rect x="1162" y="91" width="18" height="1" fill="#c6c6c6"/><rect x="1162" y="114.500" width="18" height="1" fill="#c6c6c6"/>
<path d="M1168.500 80l2.500-3 2.500 3z" fill="#c0c0c0"/>
<path d="M1168 101.500h6l-3 3.500z" fill="#666"/>
<rect x="1168" y="123" width="6" height="1" fill="#666"/><path d="M1168 125.500h6l-3 3.500z" fill="#666"/>
<path d="M1196.500 82.500v-8l2-4.500v-2h3.500v2l1 2h2.500l1-2v-2h3.500v2l2 4.500v8h-6v-6h-3.500v6z" fill="#555"/>
<path d="M1255.5 73.0h7l-3.5 4z" fill="#666"/>
<text x="1196.0" y="102.5" font-family="'Liberation Sans', sans-serif" font-size="11" fill="#777">ab</text>
<text x="1203.5" y="111.0" font-family="'Liberation Sans', sans-serif" font-size="11" fill="#444">ac</text>
<path d="M1197.500 104v3h4.500m-2-2l2 2-2 2" fill="none" stroke="#3e7cc0" stroke-width="1.200"/>
<path d="M1200.500 120.500v14l3.500-3.500 2.500 5.500 2-1-2.500-5.500h4.500z" fill="#fff" stroke="#555" stroke-width="1"/>
<path d="M1261.5 126.0h7l-3.5 4z" fill="#666"/>
<path d="M305.500 173.500h10v4.500l-5 5-5-5z" fill="#fff" stroke="#777" stroke-width="1"/>
<path d="M338.500 194.500v-4.500l5-5 5 5v4.500z" fill="#fff" stroke="#777" stroke-width="1"/><rect x="338.500" y="194.500" width="10" height="6" fill="#fff" stroke="#777" stroke-width="1"/>
<path d="M1123.500 194.500v-4.500l5-5 5 5v4.500z" fill="#fff" stroke="#777" stroke-width="1"/>
<path d="M11.800 183v7.200h7.200" fill="none" stroke="#555" stroke-width="1.800"/>
<rect x="1069.500" y="693" width="40.500" height="27" fill="#1e4480"/>
<path d="M1041.500 700.500h5.500l.5.800.5-.800h5.500v10h-5.500l-.5.800-.5-.800h-5.500z" fill="none" stroke="#fff" stroke-width="1"/><path d="M1047.500 700.500v11" stroke="#fff" stroke-width="1"/>
<rect x="1043" y="702.0" width="3" height="1" fill="#fff"/><rect x="1049" y="702.0" width="3" height="1" fill="#fff"/>
<rect x="1043" y="704.0" width="3" height="1" fill="#fff"/><rect x="1049" y="704.0" width="3" height="1" fill="#fff"/>
<rect x="1043" y="706.0" width="3" height="1" fill="#fff"/><rect x="1049" y="706.0" width="3" height="1" fill="#fff"/>
<rect x="1043" y="708.0" width="3" height="1" fill="#fff"/><rect x="1049" y="708.0" width="3" height="1" fill="#fff"/>
<rect x="1082.500" y="699.500" width="13" height="12" fill="none" stroke="#fff" stroke-width="1"/>
<rect x="1084.500" y="702" width="9" height="1" fill="#fff"/>
<rect x="1084.500" y="704" width="9" height="1" fill="#fff"/>
<rect x="1084.500" y="706" width="9" height="1" fill="#fff"/>
<rect x="1084.500" y="708" width="9" height="1" fill="#fff"/>
<path d="M1130 711.500h-6.500v-12h11v5.500" fill="none" stroke="#fff" stroke-width="1"/>
<rect x="1125.500" y="702" width="7" height="1" fill="#fff"/>
<rect x="1125.500" y="704" width="7" height="1" fill="#fff"/>
<rect x="1125.500" y="706" width="4" height="1" fill="#fff"/>
<circle cx="1133.500" cy="708.500" r="3.300" fill="#fff"/><path d="M1131.500 707.500l2 .5.500 2M1135 706.500l-1 1.500" stroke="#2b579a" stroke-width="1" fill="none"/>
<rect x="1156" y="705" width="9" height="2" fill="#fff"/><rect x="1169" y="706" width="125" height="1" fill="#fff"/><rect x="1230.500" y="699" width="5.500" height="14" fill="#fff"/>
<rect x="1298" y="705" width="12" height="2" fill="#fff"/><rect x="1303" y="700" width="2" height="12" fill="#fff"/>
<defs><clipPath id="tbclip"><rect x="0" y="720" width="1366" height="48"/></clipPath></defs>
<g clip-path="url(#tbclip)"><path d="M434 700V742.600C450 740 466 737 482 736.500C495 735.500 505 735 515 735.500C530 737 545 742 556 746.700C566 750 576 752 584 752C598 752.500 612 752 625 751C640 750 655 748 666 746.700C690 748 715 750.500 740 750.500C760 750 775 749 790 747.600C812 744 832 740.500 851 738C868 735.500 884 734.500 897 734.700C908 735.500 920 737.500 929.500 739.500V700z" fill="#cbc62f" stroke="#cbc62f" stroke-width="21" stroke-linejoin="round"/><path d="M434 700V742.600C450 740 466 737 482 736.500C495 735.500 505 735 515 735.500C530 737 545 742 556 746.700C566 750 576 752 584 752C598 752.500 612 752 625 751C640 750 655 748 666 746.700C690 748 715 750.500 740 750.500C760 750 775 749 790 747.600C812 744 832 740.500 851 738C868 735.500 884 734.500 897 734.700C908 735.500 920 737.500 929.500 739.500V700z" fill="#67a03f" stroke="#7aa63c" stroke-width="2"/></g>
<path d="M13.500 732.500l14.500-2.200v12.700h-14.500zM29.500 730l16.800-2.700v15.700h-16.800zM13.500 744.500h14.500v12.700l-14.500-2.200zM29.500 744.500h16.800v15.700l-16.800-2.700z" fill="#fff"/>
<g transform="rotate(-38 95 743)"><path d="M71.500 743A23.500 11 0 0 1 118.500 743" fill="none" stroke="#e9a914" stroke-width="3"/></g>
<circle cx="97.500" cy="745.500" r="11.800" fill="none" stroke="#30aeea" stroke-width="8.400" stroke-dasharray="66.500 7.640" stroke-dashoffset="-7.640"/><rect x="87" y="742.500" width="26.200" height="6.500" fill="#30aeea"/>
<g transform="rotate(-38 95 743)"><path d="M71.500 743A23.500 11 0 0 0 98 753.900" fill="none" stroke="#f5bd22" stroke-width="3"/></g>
<rect x="135.500" y="721.500" width="63.500" height="48" fill="#807c52" stroke="#aaa785" stroke-width="1"/><rect x="200.500" y="721.500" width="3.500" height="48" fill="#807c52" stroke="#aaa785" stroke-width="1"/>
<path d="M148.500 760v-31.500l2-2.500h14l2 2.500h19l1.500 2v29.500z" fill="#f3d77c" stroke="#d9b24c" stroke-width="1"/><rect x="153" y="728" width="10" height="3" fill="#fff"/><rect x="153" y="728" width="2.500" height="3" fill="#2a9d48"/><rect x="162" y="731" width="10" height="3" fill="#fff"/><rect x="162" y="731" width="2.500" height="3" fill="#d8262c"/><rect x="172" y="734" width="10" height="3" fill="#fff"/><rect x="172" y="734" width="2.500" height="3" fill="#2870c8"/>
<path d="M149 737h37.500v23h-37.500z" fill="#f6df92"/>
<path d="M152.500 762v-12.500a2 2 0 0 1 2-2h26a2 2 0 0 1 2 2v12.500h-8v-5h-14v5z" fill="#58b4ea" stroke="#3a94cc" stroke-width="1"/>
<rect x="223" y="725" width="38" height="38" fill="#008a00"/>
<path d="M229.500 738.500l24-2.500v21l-5 2-19-3.500z" fill="#fff"/><path d="M234.500 737.500c0-9 11-10 12-1.500" fill="none" stroke="#fff" stroke-width="1.500"/>
<path d="M233 742.500l5.500-.5v5.500h-5.500zM240 741.800l6-.5v6.200h-6zM233 749h5.500v5.500l-5.500-.8zM240 749h6v6.500l-6-.8z" fill="#008a00"/>
<rect x="281.500" y="721.500" width="69" height="48" fill="#cfcda4" stroke="#dddbb8" stroke-width="1"/>
<circle cx="314.700" cy="743.700" r="18" fill="#dc4a3d"/>
<path d="M314.700 743.700L299.100 734.700A18 18 0 0 0 310 761.100z" fill="#1da462"/>
<path d="M314.700 743.700L310 761.100A18 18 0 0 0 332.700 743.700A18 18 0 0 0 330.300 734.700H314.700z" fill="#fcc934"/>
<path d="M314.700 743.700L299.100 734.700A18 18 0 0 1 330.300 734.700z" fill="#dc4a3d"/>
<circle cx="314.700" cy="743.700" r="8.600" fill="#fff"/><circle cx="314.700" cy="743.700" r="6.800" fill="#4688f1"/>
<circle cx="325.300" cy="754.200" r="9.800" fill="#4a4038"/><circle cx="323" cy="750" r="4" fill="#8a5a3c"/><path d="M316.500 758.500c2-5 11-6 15.500-2a9.800 9.800 0 0 1-15.500 2z" fill="#e9e4d8"/>
<defs><linearGradient id="ffg" x1="0.85" y1="0.05" x2="0.2" y2="1"><stop offset="0" stop-color="#ffe23a"/><stop offset="0.35" stop-color="#ff9a1f"/><stop offset="0.7" stop-color="#ff4a3c"/><stop offset="1" stop-color="#e81a8c"/></linearGradient><radialGradient id="ffp" cx="0.5" cy="0.4" r="0.6"><stop offset="0" stop-color="#9a4cf0"/><stop offset="1" stop-color="#6a2ac0"/></radialGradient></defs>
<path d="M369.500 738c-2 9 1 18 9 22.500 8 4 18 2.500 24-4 5.500-6 6-15 2.500-22-1.500-4-4.500-6-5.500-10-2 1.500-3 4-3 6-2-4-6-6.500-10-7 1.500 2 2 4 1.500 6-4-1-8 0-11 3 3-.5 5 0 7 1.500-5 .5-9 3-11 7 2-1 4-1.500 6-1-4 2.500-7 6-8 10.500-.5-4-1-8-1.500-12.500z" fill="url(#ffg)"/>
<circle cx="390" cy="746" r="9" fill="url(#ffp)"/>
<path d="M379 742c3-4 9-5 14-2-3 0-5 1.500-6 4l-3 5c-3-1-5-4-5-7z" fill="#ff8a22"/><path d="M374 752c4 7 12 10 20 8 5-1.500 9-5 10.500-10-3 4-8 6.500-14 6.500-7 0-13-2-16.500-4.500z" fill="#ff3a50" opacity=".85"/>
<path d="M444.500 729.500l20 14.500-20 14.500z" fill="#5e2bd0"/><path d="M478 729.500v29l-20-14.500z" fill="#cfc0f5"/><path d="M444.500 729.500l20 14.500-20 14.500z" fill="#5e2bd0" opacity=".9"/>
<circle cx="533.800" cy="743" r="17.500" fill="#141414" stroke="#e8262c" stroke-width="2"/><circle cx="531" cy="744" r="6" fill="none" stroke="#e8262c" stroke-width="3.500" stroke-dasharray="3 1.700"/><path d="M531 752c6 0 9-4 10-9h-3l5-6 4 6h-2.500c-1 7-6 11.500-13.500 11.500z" fill="#e8262c"/>
<rect x="592" y="730" width="28" height="31" fill="#8ccde6"/><rect x="588.500" y="731.500" width="27" height="29.500" fill="#5fb6dc" stroke="#a6dcef" stroke-width="1"/><circle cx="602" cy="745" r="10.500" fill="#f58a1f"/><path d="M598.500 739l9.500 6-9.500 6z" fill="#fff"/>
<path fill-rule="evenodd" d="M660.500 743.800a19 19 0 1 0 38 0a19 19 0 1 0 -38 0zM671 743.800a8.500 14.500 0 1 0 17 0a8.500 14.500 0 1 0 -17 0z" fill="#e81828"/>
<rect x="719.500" y="721.500" width="61" height="48" fill="#fff" fill-opacity=".32" stroke="#fff" stroke-opacity=".85" stroke-width="1.200"/><rect x="781.500" y="721" width="3" height="48" fill="#fff" fill-opacity=".32" stroke="#fff" stroke-opacity=".85" stroke-width="1"/><rect x="785.500" y="721" width="2.500" height="48" fill="#fff" fill-opacity=".32" stroke="#fff" stroke-opacity=".85" stroke-width="1"/>
<path d="M731 730.500L752 725.800V761.700L731 758.200z" fill="#2b579a"/><rect x="752" y="730.500" width="14.500" height="27" rx="1" fill="#fff" stroke="#2b579a" stroke-width="1.200"/>
<rect x="754" y="734" width="10.500" height="2" fill="#2b579a"/>
<rect x="754" y="738" width="10.500" height="2" fill="#2b579a"/>
<rect x="754" y="742" width="10.500" height="2" fill="#2b579a"/>
<rect x="754" y="746" width="10.500" height="2" fill="#2b579a"/>
<rect x="754" y="750" width="10.500" height="2" fill="#2b579a"/>
<rect x="754" y="754" width="10.500" height="2" fill="#2b579a"/>
<path d="M734.500 737.500l3 13.500 3.300-10 3.300 10 3-13.500" fill="none" stroke="#fff" stroke-width="2.400"/>
<path d="M1065 747.800l5.200-6.500 5.200 6.500z" fill="#fff"/>
<path d="M1095.500 740.500h4l6-5.500v19.500l-6-5.500h-4z" fill="#e8e8e8" stroke="#fff" stroke-width="1"/><path d="M1110 740.500c1.500 2.500 1.500 6 0 8.500" fill="none" stroke="#fff" stroke-width="1.200"/>
<rect x="1124.5" y="749.8" width="2.300" height="3" fill="#fff"/>
<rect x="1127.7" y="746.8" width="2.300" height="6" fill="#fff"/>
<rect x="1130.9" y="743.8" width="2.300" height="9" fill="#fff"/>
<rect x="1134.1" y="740.8" width="2.300" height="12" fill="#fff"/>
<rect x="1137.3" y="737.3" width="2.300" height="15.5" fill="#fff"/>
<rect x="1155.500" y="735.700" width="1.800" height="19" fill="#fff"/><path d="M1157.500 736.500c4-1.500 6 1 9.500.5l2 1.500v7.500c-4 1-7-1.500-11.500 0z" fill="#fff"/><circle cx="1167.500" cy="749.600" r="5" fill="#e0202a"/><path d="M1165.300 747.400l4.400 4.400m0-4.400l-4.400 4.400" stroke="#fff" stroke-width="1.400"/>
<path d="M1186 735.500v5m4.500-5v5M1184.800 740.500h7v3.500l-2.500 2.500v8h-2v-8l-2.500-2.500z" fill="#fff" stroke="#fff" stroke-width="1.200"/><rect x="1194.500" y="737.500" width="8" height="16" rx="1" fill="none" stroke="#fff" stroke-width="1.600"/><rect x="1196.500" y="735.300" width="4" height="2" fill="#fff"/>
</svg>
</div></body></html>
